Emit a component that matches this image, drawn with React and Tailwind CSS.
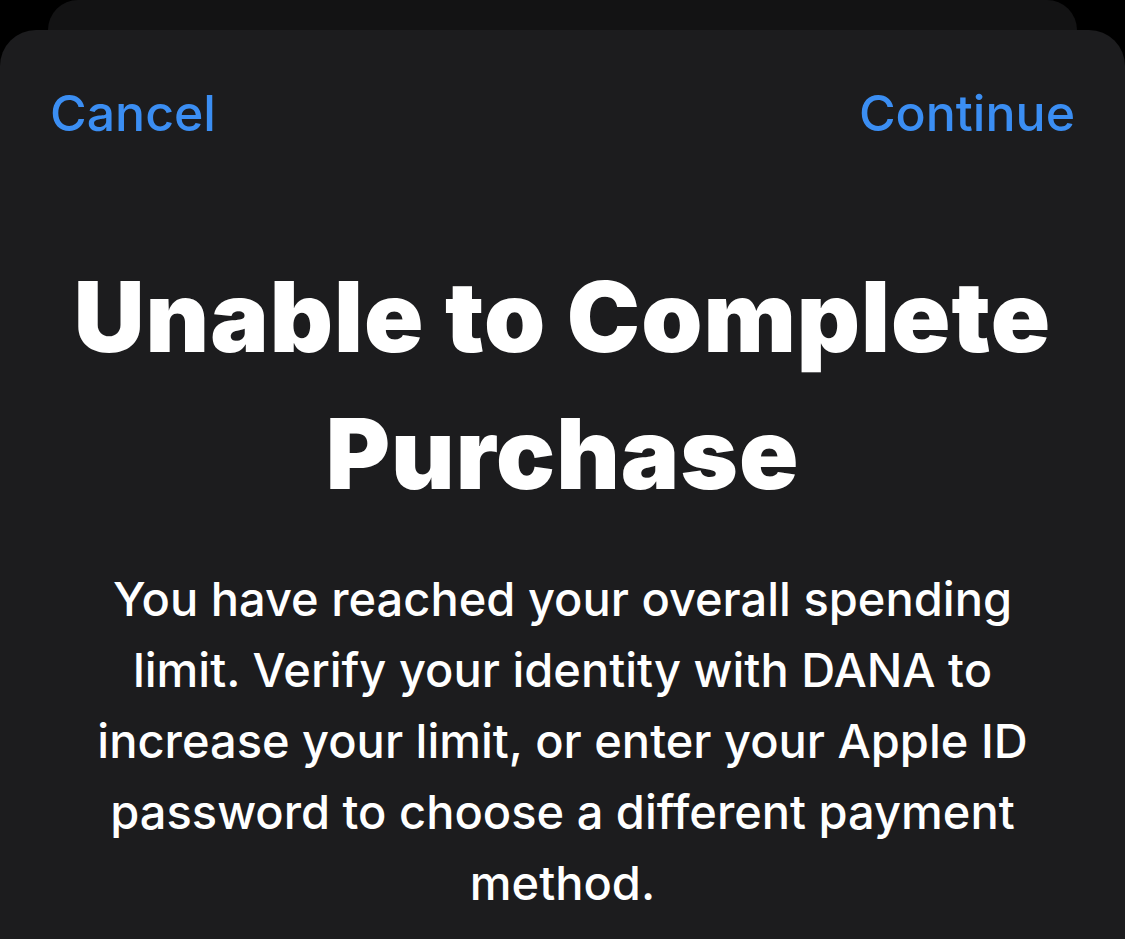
export default function App() {
  return (
    <div className="w-[1125px] h-[939px] bg-black overflow-hidden flex flex-col" style={{ fontFamily: 'Inter, "Noto Sans", sans-serif' }}>
      <div className="mx-[48px] h-[30px] shrink-0 bg-[#131314] rounded-t-[32px]" />
      <div className="flex-1 bg-[#1c1c1e] rounded-t-[36px] flex flex-col">
        <div className="flex justify-between items-center px-[50px] pt-[58px] text-[50px] leading-none text-[#3b8ef3] font-medium">
          <span>Cancel</span>
          <span>Continue</span>
        </div>
        <h1 className="mt-[110px] text-center text-white font-black text-[98px] leading-[137px] tracking-[1px]">
          Unable to Complete<br />Purchase
        </h1>
        <p className="mt-[41px] text-center text-white font-medium text-[47px] leading-[71px]">
          You have reached your overall spending<br />
          limit. Verify your identity with DANA to<br />
          increase your limit, or enter your Apple ID<br />
          password to choose a different payment<br />
          method.
        </p>
      </div>
    </div>
  );
}
